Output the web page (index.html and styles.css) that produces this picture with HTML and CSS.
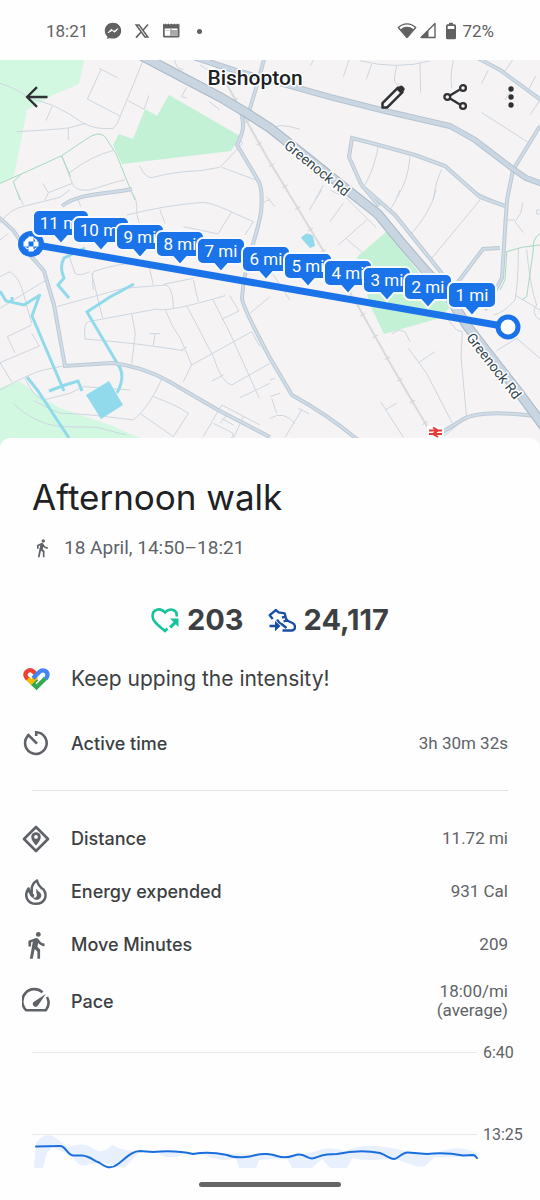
FILE: index.html
```html
<!DOCTYPE html>
<html lang="en-GB">
<head>
<meta charset="utf-8">
<meta name="viewport" content="width=device-width, initial-scale=1">
<title>Afternoon walk</title>
<link rel="stylesheet" href="styles.css">
</head>
<body>
<div class="status">
  <span class="status-time">18:21</span>
  <svg class="status-icon" viewBox="0 0 18 18" width="18" height="18" aria-hidden="true"><path fill="#616161" d="M9 .8C4.300.8.8 4.200.8 8.700c0 2.300 1 4.300 2.500 5.700v2.600l2.400-1.100c1 .4 2.100.6 3.300.6 4.700 0 8.200-3.400 8.200-7.800S13.700.8 9 .8z"/><path d="M4 10.800 7.300 7.200 9.800 9.300 14 6.700 10.800 10.300 8.200 8.400z" fill="#fff" stroke="#fff" stroke-width=".8" stroke-linejoin="round"/></svg>
  <svg class="status-icon" viewBox="0 0 16 16" width="16" height="16" aria-hidden="true"><g fill="none" stroke="#616161"><path d="M2.200 2h2.900l8.700 12h-2.900z" stroke-width="1.500"/><path d="M14 1.500 9 7.200M6.900 9.200 2 14.600" stroke-width="1.600"/></g></svg>
  <svg class="status-icon" viewBox="0 0 18 18" width="18" height="18" aria-hidden="true"><path fill="#616161" d="M1 1.500l1 1 1.500-1 1.500 1 1.500-1 1.500 1 1.500-1 1.500 1 1.500-1 1.500 1 1.500-1 1 1 1-1V14a1.500 1.500 0 0 1-1.500 1.500h-13A1.500 1.500 0 0 1 1 14z"/><path d="M2.700 6.500h12.800v7.300H2.700z" fill="#fff"/><path d="M9 7.200v6.600M9 10h6.500" stroke="#616161"/><path d="M9.500 8h6v5.800h-6z" fill="#aaa"/><path d="M3.500 8.500h4" stroke="#ccc"/></svg>
  <span class="status-dot"></span>
  <span class="status-right">
    <svg viewBox="0 0 20 18" width="20" height="18" aria-hidden="true"><path d="M1.300 5.500C6.500.7 13.500.7 18.700 5.500L10 15.500z" fill="none" stroke="#616161" stroke-width="1.400" stroke-linejoin="round"/><path d="M3.500 7.300C7.500 4 12.500 4 16.500 7.300L10 15.500z" fill="#616161"/></svg>
    <svg viewBox="0 0 18 18" width="18" height="18" aria-hidden="true"><path d="M2 15.500 16 1.500v14z" fill="none" stroke="#616161" stroke-width="1.400" stroke-linejoin="round"/><path d="M2 15.500 9.500 8v7.500z" fill="#616161"/></svg>
    <svg class="battery" viewBox="0 0 12 18" width="12" height="18" aria-hidden="true"><path d="M4 .8h4v2H4z" fill="#616161"/><rect x="1" y="2.300" width="10" height="15" rx="1.500" fill="#616161"/><path d="M2.700 4h6.600v3H2.700z" fill="#fff"/></svg>
    <span class="status-time">72%</span>
  </span>
</div>

<header class="map">
  <svg class="map-canvas" viewBox="0 60 540 392" preserveAspectRatio="xMidYMid slice" role="img" aria-label="Route map around Bishopton">
    <defs>
      <path id="major" d="M142 56 180 76 220 97 245 112 270 128 290 144 350 192 378 214 400 241 425 270 445 291 468 327 495 362 520 394 545 428"/>
      <path id="link" d="M190 56 240 72 280 83 330 97 385 111 450 126 475 140 513 169 526 178 545 185"/>
      <path id="rail" d="M210 56 230 90 250 127 268 159 288 192 306 222 324 252 358 306 394 370 428 428"/>
      <g id="minor">
        <path d="M265 56 257 85 253 98 249 112"/>
        <path d="M241 112C245 126 243 133 237 145L246 160 259 182Q263 191 261 212C258 235 244 262 242 298 242 305 256 332 270 358L292 395C310 405 334 420 358 440"/>
        <path d="M474 56 500 70 545 103M540 126 513 170 507 200 505 230 502 278 485 310"/>
        <path d="M379 206 361 184 349 157 352 138 375 144 415 155 445 166 480 197 505 206M362 186 395 215 448 281"/>
        <path d="M-5 214 13 230 30 255 44 271 54 305 65 366 112 363Q142 366 170 382L218 410 270 437"/>
        <path d="M62 206C80 192 112 194 132 189M425 443 462 420Q480 409 535 416M458 282 483 249 500 248"/>
      </g>
      <path id="pin" d="M-18-33H18a6 6 0 0 1 6 6v14a6 6 0 0 1-6 6H7L0 1-7-7H-18a6 6 0 0 1-6-6v-14a6 6 0 0 1 6-6z"/>
      <path id="pin-wide" d="M-22-33H22a6 6 0 0 1 6 6v14a6 6 0 0 1-6 6H7L0 1-7-7H-22a6 6 0 0 1-6-6v-14a6 6 0 0 1 6-6z"/>
    </defs>

    <path class="land" d="M0 60h540v400H0z"/>
    <path class="park-light" d="M0 60H84L79 84 53 95 27 110 14 176 0 184zM0 388 20 381Q35 395 60 408L110 425 145 440V460H0z"/>
    <path class="park" d="M113 145 119 134 133 139 145 109 157 116 169 95 240 136 231 151 122 164zM357 257 387 231 417 270 450 307 440 318 384 334 370 305z"/>

    <g class="lane" transform="scale(.33333)">
      <path d="M0 250Q50 265 80 290L160 317Q210 340 250 370 290 390 340 385 355 370 360 350L385 290 430 180M298 205 352 233M304 207 262 297 362 349M156 319 138 362M50 395Q150 390 205 384L258 370M205 384V420M385 302 432 328 447 286M338 452Q280 465 205 520M185 468 217 550Q225 575 270 570L350 545 375 540M128 550 145 578 217 550M145 578 135 600M418 497Q440 540 460 532 520 515 600 512L660 502 728 430 712 408M665 502 765 539M524 180Q530 210 550 208M560 262 545 290 560 294M628 305 660 330M600 195 640 220"/>
    </g>
    <g class="trail" transform="scale(.33333)">
      <path d="M0 550 80 515 185 467 255 420Q295 390 315 410 335 440 350 465L380 540 405 600M185 467 212 530M62 525 40 545 60 600"/>
    </g>
    <g class="lane" transform="translate(270 0) scale(.33333)">
      <path d="M130 180 122 197M237 180 220 230M305 192 289 238M270 182Q380 210 480 183M380 196C375 230 365 250 388 255M450 190 452 278M550 180Q540 230 545 265M655 210 635 250M728 180 700 220M797 228 775 270M635 338 773 426M0 390Q20 365 90 388M325 437Q315 500 285 555M420 470Q415 540 380 595M515 508Q495 550 490 600M705 300 720 275M810 300 780 345M160 555 135 600"/>
    </g>
    <g class="lane" transform="translate(0 190) scale(.33333)">
      <path d="M0 100Q30 55 75 48L180 22 210 0M50 0 70 45M0 150 25 130M235 30 242 50M390 0Q415 25 410 70L425 130M380 75Q500 45 610 37 640 40 695 66L760 95 735 135M480 60 495 100M695 66 655 130M550 110Q600 120 655 132M810 30Q795 30 790 40M205 190 225 250Q240 260 270 245M280 300Q275 255 280 245 350 220 440 215M275 250 308 385M445 220 460 285M170 350 370 295 500 285Q520 300 520 355M490 283 580 265M580 270 595 335M0 355 135 272M0 260 30 245Q60 265 70 310L95 400M95 405 22 440 45 488M0 518 118 468 95 430M0 518 35 575M265 395 470 357Q495 370 675 317M265 395Q250 400 255 447 420 460 550 482M395 370 406 430 395 522M448 431H480M465 431 460 467M497 362Q515 410 542 447L575 525 550 575M560 347 640 500Q665 580 695 585L810 520M638 327 690 430 778 625M690 317Q705 345 717 363L665 388M542 482 560 470M575 525 755 425 780 470M635 573 670 555M720 623 810 580M0 600Q90 550 130 540L190 528M75 565Q100 620 130 630L210 610 250 590 390 600M100 632 180 670Q250 670 400 690 450 650 487 563M460 620Q530 645 565 670L520 740 420 670M290 600Q280 650 345 655M40 640Q100 700 180 710L290 712 380 735M610 740 665 645 780 705M640 700 700 730 695 745M665 685 700 705M685 670 660 700M730 680 700 745M750 370 810 320"/>
    </g>
    <g class="lane" transform="translate(270 190) scale(.33333)">
      <path d="M-10 20 15 50M155 0 118 60M220 40 180 95M180 0 230 25 318 112M290 90 205 165M230 147 280 190M390 0Q370 50 358 60M498 0Q480 70 425 130M630 30 485 205M758 38 752 70 735 95 760 128M700 90H735M810 60H800V72H810M745 175Q745 280 735 330 700 370 670 375M770 178Q780 290 800 345 780 370 810 390M735 315 810 360M740 445 680 482M740 445 810 505M0 240 60 330M535 390 560 420 577 425 573 500 590 685M415 475 470 550 547 700M447 517 495 485M365 432 385 420 405 425 420 455M0 570 15 565M0 620 30 610M5 625 20 670M0 685Q40 660 75 700M85 655 118 672M95 660 45 742M332 635 400 742M345 660 380 640M605 0 690 40M520 740 580 690 560 700"/>
    </g>
    <g class="trail" transform="translate(270 190) scale(.33333)"><path d="M810 165 755 172 710 185 705 270 690 300M810 130Q785 150 790 180L770 320 755 330"/></g>

    <g class="water">
      <path d="M0 291 6 301 24 305 40 295M12 297V302M40 294 32 316 64 391M49 391 65 385 78 381 82 391M27 377 38 391 69 438M85 248 64 258Q59 267 64 278L58 285 69 298M134 284 110 297 87 312 120 368Q125 378 117 393"/>
    </g>
    <path class="pond" d="M86 395 109 381 123 405 101 419zM301 238Q307 230 313 236L315 246 310 248z"/>

    <use href="#rail" class="rail"/><use href="#rail" class="rail-ties"/>
    <use href="#minor" class="minor-edge"/><use href="#minor" class="minor-fill"/>
    <use href="#link" class="link-edge"/><use href="#link" class="link-fill"/>
    <use href="#major" class="major-edge"/><use href="#major" class="major-fill"/>

    <text class="place" x="255" y="85">Bishopton</text>
    <text class="road" transform="translate(314 172) rotate(39)">Greenock Rd</text>
    <text class="road" transform="translate(490 369) rotate(52)">Greenock Rd</text>
    <g class="station"><path class="station-back" d="M427 432h17"/><path d="M429 430.500h13M429 434h13M433 427.500l5 3-5 3.500 5 3"/></g>

    <path class="route" d="M31 244 508 327"/>
    <circle cx="31" cy="244" r="13" fill="#1a73e8"/>
    <path fill="#fff" d="M28.500 236.500h5v5h-5zM28.500 246.500h5v5h-5zM23.500 241.500h5v5h-5zM33.500 241.500h5v5h-5zM24.500 241.500a8 8 0 0 1 4-4v4zM33.500 237.500a8 8 0 0 1 4 3l-1 1h-1zM37.500 246.500a8 8 0 0 1-4 4v-1zM24.500 246.500a8 8 0 0 0 3 3l1-1z"/>
    <circle class="route-start" cx="508" cy="327" r="10"/>

    <g class="pins">
      <g transform="translate(61 243)"><use href="#pin-wide"/><text y="-14">11 mi</text></g>
      <g transform="translate(101 250)"><use href="#pin-wide"/><text y="-14">10 mi</text></g>
      <g transform="translate(140 257)"><use href="#pin"/><text y="-14">9 mi</text></g>
      <g transform="translate(180 264)"><use href="#pin"/><text y="-14">8 mi</text></g>
      <g transform="translate(221 271)"><use href="#pin"/><text y="-14">7 mi</text></g>
      <g transform="translate(266 279)"><use href="#pin"/><text y="-14">6 mi</text></g>
      <g transform="translate(308 286)"><use href="#pin"/><text y="-14">5 mi</text></g>
      <g transform="translate(348 293)"><use href="#pin"/><text y="-14">4 mi</text></g>
      <g transform="translate(387 300)"><use href="#pin"/><text y="-14">3 mi</text></g>
      <g transform="translate(428 307)"><use href="#pin"/><text y="-14">2 mi</text></g>
      <g transform="translate(472 315)"><use href="#pin"/><text y="-14">1 mi</text></g>
    </g>
  </svg>
  <nav class="toolbar" aria-label="Activity actions">
    <button class="tool tool-back" type="button" aria-label="Back"><svg viewBox="0 0 24 24" width="28" height="28"><path d="M21 12H4M12 3.500 3.500 12l8.500 8.500" fill="none" stroke="#303134" stroke-width="2"/></svg></button>
    <button class="tool" type="button" aria-label="Edit"><svg viewBox="0 0 28 28" width="28" height="28"><path d="M3.500 20.200 19 4.600l4.500 4.500L8 24.600H3.500z" fill="none" stroke="#303134" stroke-width="2.500" stroke-linejoin="round"/><path d="M17.300 6.300 20.700 3q1.300-1.200 2.700 0l1.800 1.800q1.200 1.300 0 2.700L21.800 10.800z" fill="#303134"/></svg></button>
    <button class="tool" type="button" aria-label="Share"><svg viewBox="0 0 28 28" width="28" height="28"><g fill="none" stroke="#303134" stroke-width="2.300"><path d="m8 12.500 9.500-5.800M8 15.500l9.500 5.800"/><circle cx="21" cy="5" r="2.900"/><circle cx="5.300" cy="14" r="2.900"/><circle cx="21" cy="23" r="2.900"/></g></svg></button>
    <button class="tool tool-more" type="button" aria-label="More options"><svg viewBox="0 0 28 28" width="28" height="28"><g fill="#303134"><circle cx="14" cy="6" r="2.700"/><circle cx="14" cy="14" r="2.700"/><circle cx="14" cy="22" r="2.700"/></g></svg></button>
  </nav>
</header>

<main class="sheet">
  <h1 class="title">Afternoon walk</h1>
  <p class="when"><svg viewBox="0 0 24 24" width="20" height="20" aria-hidden="true"><path fill="#5f6368" d="M13.500 5.500c1.100 0 2-.9 2-2s-.9-2-2-2-2 .9-2 2 .9 2 2 2zM9.800 8.900 7 23h2.100l1.800-8 2.100 2v6h2v-7.500l-2.100-2 .6-3C14.800 12 16.800 13 19 13v-2c-1.900 0-3.500-1-4.300-2.400l-1-1.600c-.4-.6-1-1-1.700-1-.3 0-.5.1-.8.1L6 8.300V13h2V9.600z"/></svg><span>18 April, 14:50–18:21</span></p>

  <div class="stats">
    <span class="stat"><svg viewBox="0 0 28 26" width="28" height="26" aria-label="Heart Points"><path d="M25.500 9.500C27 3 19 0 14 5.500 9 0 1.500 2.500 1.500 9c0 5.500 6 9.500 12.500 15l2.500-2.500" fill="none" stroke="#17c39b" stroke-width="2.600" stroke-linejoin="miter"/><path d="M19 11.500h8.500V20l-2.800-2.800-4.400 4.300-2.200-2.200 4.400-4.400z" fill="#17c39b"/></svg>203</span>
    <span class="stat"><svg viewBox="0 0 28 26" width="28" height="26" aria-label="Steps"><path d="M4.700 12 1.700 8.200 8 3l2.500 2.300 6.200 1L18 11.500q.8 2 2.700 2.800l3.800 1.700q2.500 1.300 2.500 4 0 3.500-3.500 3.500H14.500M14 10.500l4-.8M15.500 14.500l4-1.300M9 12.500q2 3.500 4.500 4.500l5 4" fill="none" stroke="#174ea6" stroke-width="2.300" stroke-linejoin="round"/><path d="M1.500 17.800H7v-4l5.500 5.200L7 24.200v-4H1.500z" fill="#174ea6"/></svg>24,117</span>
  </div>

  <div class="row row-tip">
    <svg class="row-icon" viewBox="0 0 28 28" width="28" height="28" aria-hidden="true"><g fill="none" stroke-width="4.300"><path d="m10.500 18.300 4 3.900 9-9" stroke="#34a853"/><path d="m6 13.800 4.500 4.500 4.300-4.300" stroke="#34a853"/><path d="m4.700 12.500 4.500 4.500 5.300-5.300" stroke="#fbbc04"/><path d="m15.600 10.700-4.200-4.100C7.500 3 2.500 7 3.600 10.900q.5 1.700 2.200 3" stroke="#ea4335"/><path d="m11 13.300 6.300-6.300C21 3.500 26.500 6.500 25.300 11q-.4 1.600-1.800 2.900" stroke="#4285f4"/></g></svg>
    <h2 class="tip">Keep upping the intensity!</h2>
  </div>
  <dl class="metrics">
    <div class="row row-time">
      <svg class="row-icon" viewBox="0 0 28 28" width="28" height="28" aria-hidden="true"><g fill="none" stroke="#5f6368" stroke-width="2.600"><path d="M14.200 7V3.300A10.800 10.800 0 1 1 6.500 6.200"/><path d="m5.500 5.200 9.500 9.500"/></g></svg>
      <dt>Active time</dt><dd>3h 30m 32s</dd>
    </div>
    <div class="row">
      <svg class="row-icon" viewBox="0 0 28 28" width="28" height="28" aria-hidden="true"><path d="M14 2 26 14 14 26 2 14z" fill="none" stroke="#5f6368" stroke-width="2.700" stroke-linejoin="round"/><path fill="#5f6368" fill-rule="evenodd" d="M14 7.200a4.800 4.800 0 0 0-4.800 4.800c0 3.500 4.800 8.500 4.800 8.500s4.800-5 4.800-8.500A4.800 4.800 0 0 0 14 7.200zm0 2.800a1.900 1.900 0 1 1 0 3.800 1.900 1.900 0 0 1 0-3.800z"/></svg>
      <dt>Distance</dt><dd>11.72 mi</dd>
    </div>
    <div class="row">
      <svg class="row-icon" viewBox="0 0 28 28" width="28" height="28" aria-hidden="true"><g fill="none" stroke="#5f6368" stroke-width="2.500" stroke-linejoin="round"><path d="M15 2.500C11 5 9.700 8 9.700 11.500v4.300Q7 14.500 6.500 10.500C1.500 18 5.500 25.800 14 25.800S26 18 21.500 11.500Q16.500 8.500 15 2.500z"/></g><path fill="#5f6368" d="M14.500 10.500Q15.500 13 18 14.500c3 3 .5 6.500-2.500 7.300-2.500.3-4-.8-4.500-2.300 3 .7 4.500-1 3.800-3.500-.8-2-.8-3.500-.3-5.500zM7.500 16h4.500q.5 4-1.500 3.700Q8 19 7.500 16z"/></svg>
      <dt>Energy expended</dt><dd>931 Cal</dd>
    </div>
    <div class="row">
      <svg class="row-icon" viewBox="0 0 24 24" width="28" height="28" aria-hidden="true"><path fill="#5f6368" d="M14 5a2.100 2.100 0 1 0 0-4.200A2.100 2.100 0 0 0 14 5zM9.300 9 6.700 23.800h2.500l1.700-8.300 2.300 2.200v6.100h2.300v-8l-2.300-2.300.7-3.200c1.400 1.700 3.200 2.700 5.400 2.700v-2.300c-1.900 0-3.400-.9-4.200-2.300l-1.100-1.500c-.5-.7-1.100-1-1.900-1L5.500 8.300v5h2.300V9.800z"/></svg>
      <dt>Move Minutes</dt><dd>209</dd>
    </div>
    <div class="row row-pace">
      <svg class="row-icon" viewBox="0 0 28 28" width="28" height="28" aria-hidden="true"><path d="M20.500 5.300A12 12 0 0 0 4.200 23.200h19.600a12 12 0 0 0 1.200-13.200" fill="none" stroke="#5f6368" stroke-width="2.600" stroke-linejoin="round"/><path d="M23.800 7 15.800 18.800a2.800 2.800 0 1 1-4.200-3.800z" fill="#5f6368"/></svg>
      <dt>Pace</dt><dd>18:00/mi<br>(average)</dd>
    </div>
  </dl>

  <svg class="chart" viewBox="0 1031 540 139" role="img" aria-label="Pace over time">
    <path class="grid" d="M32 1052.500H477M32 1134.500H477"/>
    <path class="range" d="M34 1168 36 1143Q46 1130 56 1138L68 1147Q84 1141 94 1149 102 1155 112 1145 124 1152 140 1151L240 1154 290 1156Q310 1154 322 1149 332 1147 345 1151 360 1144 385 1147 405 1150 415 1154L440 1152Q458 1144 477 1153V1157L435 1157 427 1164Q424 1168 415 1166L393 1158Q370 1162 352 1158L347 1168H330L322 1159 312 1168H292L287 1158 259 1160 256 1168H239L236 1158Q220 1163 205 1155L185 1153Q170 1162 158 1153L140 1152 124 1168 105 1163 90 1164Q80 1170 72 1156L52 1147 47 1153 43 1168z"/>
    <path class="pace-line" d="M36 1146.500 60 1146C66 1146 67 1155 73 1155.500L82 1155.500C90 1156 94 1161 99 1162.500 105 1167 111 1170 118 1164 126 1158 132 1151 140 1151L153 1152Q176 1150 193 1154C210 1151 222 1154 227 1155 236 1159 250 1157 256 1155 263 1153 272 1154 277 1156 289 1160 293 1154.500 299 1154.500S308 1158.500 312 1158.500 320 1155 327 1154.500L337 1154Q360 1149 380 1153C388 1156 390 1159 394 1159S402 1152 408 1152.500L427 1154Q445 1152 463 1155.500L473 1155Q475 1155 477 1158"/>
    <text x="483" y="1058">6:40</text><text x="483" y="1140">13:25</text>
  </svg>
</main>
<div class="home-bar"></div>
</body>
</html>
```
FILE: styles.css
```css
* { box-sizing: border-box; }
body { margin: 0; background: #fefefe; color: #3c4043; font-family: Roboto, sans-serif; font-size: 16px; }
h1, h2, p, dl, dd { margin: 0; font-weight: 400; }
svg { display: block; }

.status { display: flex; align-items: center; height: 60px; padding: 2px 46px 0; color: #616161; }
.status-time { font-size: 17px; line-height: 24px; }
.status-icon { margin-left: 12px; }
.status-icon:first-of-type { margin-left: 16px; }
.status-dot { width: 5px; height: 5px; margin-left: 17px; border-radius: 50%; background: #616161; }
.status-right { display: flex; align-items: center; gap: 2px; margin-left: auto; }
.battery { margin: 0 3px 0 6px; }

.map { position: relative; }
.map-canvas { width: 100%; aspect-ratio: 540 / 392; }
.land { fill: #f5f3f4; }
.park-light { fill: #d3f8e2; }
.park { fill: #c3f1d5; }
.lane { fill: none; stroke: #cdd6df; stroke-width: 3; }
.trail { fill: none; stroke: #a5d9be; stroke-width: 3; }
.water { fill: none; stroke: #90daeb; stroke-width: 3; }
.pond { fill: #90daeb; }
.rail { fill: none; stroke: #dadada; stroke-width: 2; }
.rail-ties { fill: none; stroke: #d4d4d4; stroke-width: 6; stroke-dasharray: 1 24; }
.minor-edge { fill: none; stroke: #bccad6; stroke-width: 4; }
.minor-fill { fill: none; stroke: #d0dce6; stroke-width: 2; }
.link-edge { fill: none; stroke: #b4c3d1; stroke-width: 6; }
.link-fill { fill: none; stroke: #cad7e3; stroke-width: 4; }
.major-edge { fill: none; stroke: #a9b8c6; stroke-width: 10; }
.major-fill { fill: none; stroke: #c9d5e1; stroke-width: 8; }
.place, .road { paint-order: stroke; stroke: #fff; stroke-width: 3px; stroke-linejoin: round; text-anchor: middle; }
.place { fill: #202124; font-size: 21px; font-weight: 500; }
.road { fill: #33474f; font-size: 14px; }
.station { fill: none; stroke: #e53935; stroke-width: 2; }
.station .station-back { stroke: #fff; stroke-width: 12; }
.route { stroke: #1a73e8; stroke-width: 7; }
.route-start { fill: #fff; stroke: #1a73e8; stroke-width: 5; }
.pins use { fill: #1a73e8; stroke: #f5f8fc; stroke-width: 2px; }
.pins text { fill: #fff; font-size: 17px; text-anchor: middle; }

.toolbar { position: absolute; top: 12px; left: 0; right: 0; display: flex; align-items: center; gap: 5px; padding: 0 8px; }
.tool { display: grid; place-items: center; width: 58px; height: 50px; padding: 0; border: 0; background: none; }
.tool-back { margin-right: auto; }
.tool-more { width: 42px; }

.sheet { position: relative; margin-top: -14px; padding-top: 35px; border-radius: 10px 10px 0 0; background: #fefefe; }
.title { padding: 0 32px; color: #202124; font-family: Inter, sans-serif; font-size: 35px; line-height: 48px; }
.when { display: flex; align-items: center; gap: 12px; margin-top: 15px; padding: 0 32px; color: #5f6368; font-size: 19px; line-height: 24px; }
.stats { display: flex; justify-content: center; gap: 24px; margin-top: 42px; font-family: Inter, sans-serif; font-size: 29px; font-weight: 700; line-height: 36px; }
.stat { display: flex; align-items: center; gap: 8px; }

.row { display: flex; align-items: center; min-height: 53px; padding: 0 32px 0 22px; }
.row-icon { flex: none; margin-right: 21px; }
.row-tip { margin-top: 14px; }
.tip { font-family: Inter, sans-serif; font-size: 21px; font-weight: 400; }
.row-time { position: relative; min-height: 86px; margin-bottom: 21px; padding-bottom: 10px; }
.row-time::after { content: ""; position: absolute; right: 32px; bottom: 0; left: 32px; height: 1px; background: #e2e3e8; }
.row dt { font-family: Inter, sans-serif; font-size: 18px; font-weight: 500; }
.row dd { margin-left: auto; color: #5f6368; font-size: 17px; line-height: 19px; text-align: right; }
.row-pace { min-height: 60px; }

.chart { width: 100%; }
.grid { stroke: #e8e9eb; stroke-width: 1; }
.range { fill: #e8f0fd; }
.pace-line { fill: none; stroke: #1b6fdc; stroke-width: 2; stroke-linecap: round; }
.chart text { fill: #5f6368; font-size: 16px; }
.home-bar { width: 142px; height: 5px; margin: 12px auto; border-radius: 3px; background: #666; }
```
